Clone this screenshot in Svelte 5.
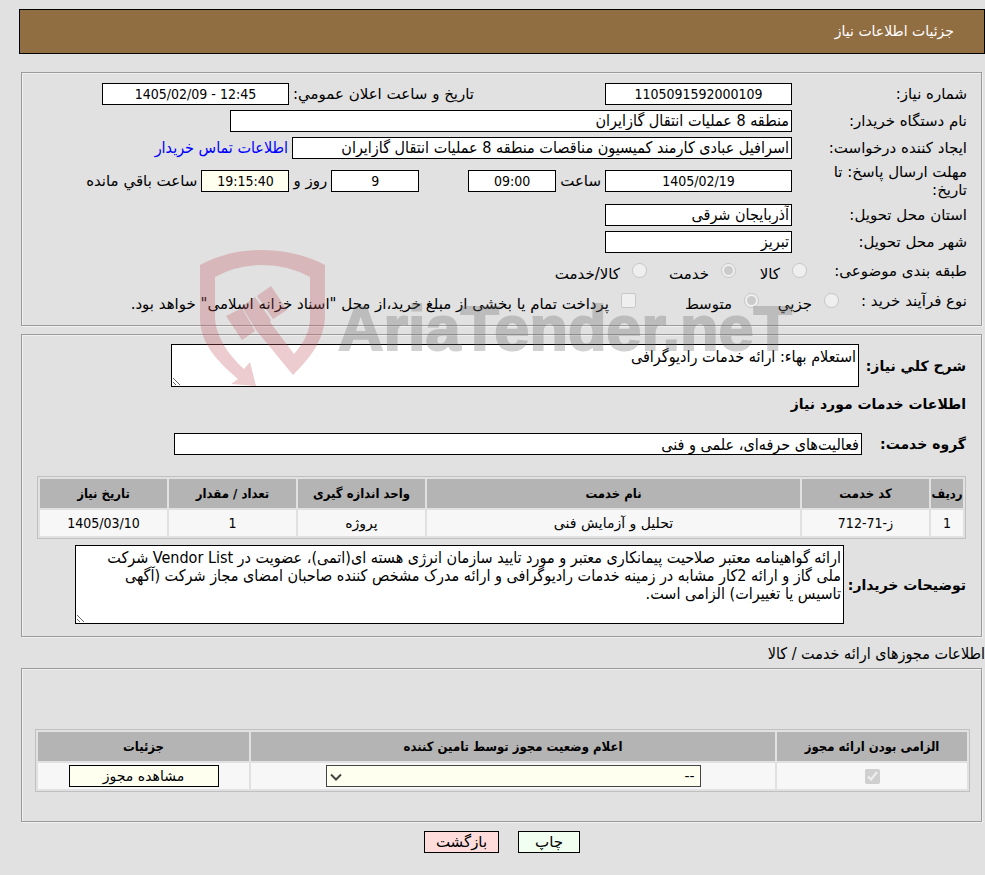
<script lang="ts">
	const services = [
		{
			code: 'ز-71-712',
			name: 'تحلیل و آزمایش فنی',
			unit: 'پروژه',
			amount: '1',
			date: '1405/03/10'
		}
	];

	const generalDescription = 'استعلام بهاء: ارائه خدمات رادیوگرافی';
	const buyerNotes =
		'ارائه گواهینامه معتبر صلاحیت پیمانکاری معتبر و مورد تایید سازمان انرژی هسته ای(اتمی)، عضویت در Vendor List شرکت ملی گاز و ارائه 2کار مشابه در زمینه خدمات رادیوگرافی و ارائه مدرک مشخص کننده صاحبان امضای مجاز شرکت (آگهی تاسیس یا تغییرات) الزامی است.';
</script>

<div class="page" dir="rtl" lang="fa">
	<h1 class="title">جزئیات اطلاعات نیاز</h1>

	<fieldset class="need">
		<div class="row">
			<label class="name" for="need-no">شماره نیاز:</label>
			<input id="need-no" class="box num w-date" value="1105091592000109" readonly />
			<label class="announce" for="announce">تاریخ و ساعت اعلان عمومي:</label>
			<input id="announce" class="box num w-date" value="1405/02/09 - 12:45" readonly />
		</div>
		<div class="row">
			<label class="name" for="org">نام دستگاه خریدار:</label>
			<input id="org" class="box w-org" value="منطقه 8 عملیات انتقال گازایران" readonly />
		</div>
		<div class="row">
			<label class="name" for="creator">ایجاد کننده درخواست:</label>
			<input
				id="creator"
				class="box w-creator"
				value="اسرافیل عبادی کارمند کمیسیون مناقصات منطقه 8 عملیات انتقال گازایران"
				readonly
			/>
			<a href="#contact">اطلاعات تماس خریدار</a>
		</div>
		<div class="row deadline">
			<label class="name" for="deadline">مهلت ارسال پاسخ: تا تاریخ:</label>
			<input id="deadline" class="box num w-date" value="1405/02/19" readonly />
			<label for="hour">ساعت</label>
			<input id="hour" class="box num w-time" value="09:00" readonly />
			<input class="box num w-time days" value="9" aria-label="روز" readonly />
			<span class="and">روز و</span>
			<input id="left" class="box num w-time left" value="19:15:40" readonly />
			<label for="left">ساعت باقي مانده</label>
		</div>
		<div class="row">
			<label class="name" for="province">استان محل تحویل:</label>
			<input id="province" class="box w-date" value="آذربایجان شرقی" readonly />
		</div>
		<div class="row">
			<label class="name" for="city">شهر محل تحویل:</label>
			<input id="city" class="box w-date" value="تبریز" readonly />
		</div>
		<div class="row options">
			<span class="name subject">طبقه بندی موضوعی:</span>
			<label class="option goods"><input type="radio" name="subject" disabled />کالا</label>
			<label class="option service"><input type="radio" name="subject" checked disabled />خدمت</label>
			<label class="option"><input type="radio" name="subject" disabled />کالا/خدمت</label>
		</div>
		<div class="row options">
			<span class="name process">نوع فرآیند خرید :</span>
			<label class="option small"><input type="radio" name="process" disabled />جزيي</label>
			<label class="option medium"><input type="radio" name="process" checked disabled />متوسط</label>
			<label class="option">
				<input type="checkbox" disabled />پرداخت تمام یا بخشی از مبلغ خرید،از محل "اسناد خزانه اسلامی"
				خواهد بود.
			</label>
		</div>
	</fieldset>

	<fieldset class="details">
		<div class="line">
			<label class="strong" for="general">شرح كلي نیاز:</label>
			<textarea id="general" class="general" value={generalDescription} readonly></textarea>
		</div>
		<h2>اطلاعات خدمات مورد نیاز</h2>
		<div class="line">
			<label class="strong group-label" for="group">گروه خدمت:</label>
			<input id="group" class="box w-group" value="فعالیت‌های حرفه‌ای، علمی و فنی" readonly />
		</div>
		<table class="services">
			<thead>
				<tr>
					<th class="c-index">ردیف</th>
					<th class="c-side">کد خدمت</th>
					<th>نام خدمت</th>
					<th class="c-side">واحد اندازه گیری</th>
					<th class="c-side">تعداد / مقدار</th>
					<th class="c-side">تاریخ نیاز</th>
				</tr>
			</thead>
			<tbody>
				{#each services as service, i}
					<tr>
						<td class="figure">{i + 1}</td>
						<td class="figure">{service.code}</td>
						<td>{service.name}</td>
						<td>{service.unit}</td>
						<td class="figure">{service.amount}</td>
						<td class="figure">{service.date}</td>
					</tr>
				{/each}
			</tbody>
		</table>
		<div class="line">
			<label class="strong" for="notes">توضیحات خریدار:</label>
			<textarea id="notes" class="notes" value={buyerNotes} readonly></textarea>
		</div>
	</fieldset>

	<p class="caption">اطلاعات مجوزهای ارائه خدمت / کالا</p>

	<fieldset class="permits">
		<table>
			<thead>
				<tr>
					<th class="c-required">الزامی بودن ارائه مجوز</th>
					<th>اعلام وضعیت مجوز توسط تامین کننده</th>
					<th class="c-view">جزئیات</th>
				</tr>
			</thead>
			<tbody>
				<tr>
					<td><input type="checkbox" aria-label="الزامی بودن ارائه مجوز" checked disabled /></td>
					<td>
						<span class="select-wrap">
							<select aria-label="اعلام وضعیت مجوز توسط تامین کننده">
								<option>--</option>
							</select>
							<svg class="chevron" viewBox="0 0 12 8" aria-hidden="true">
								<path d="M1 1.5 6 6.5 11 1.5" />
							</svg>
						</span>
					</td>
					<td><button type="button" class="view">مشاهده مجوز</button></td>
				</tr>
			</tbody>
		</table>
	</fieldset>

	<div class="actions">
		<button type="button" class="print">چاپ</button>
		<button type="button" class="back">بازگشت</button>
	</div>

	<!-- watermark laid over the form -->
	<svg class="watermark" viewBox="200 248 600 140" aria-hidden="true">
		<g class="shield">
			<path
				d="M200 265Q228 250 262 250T325 265V318C323 342 310 358 293 375L256 330 242 307 244 305 255 297 271 320 270 322 294 354C304 343 310 331 310 318V277Q288 265 262 265T215 277V318C216 338 230 356 244 369L250 362 256 386 231 384 238 379C218 362 201 344 200 320Z"
			/>
			<path d="M271 286 287 310 273 319 257 296Z" />
			<path d="M242 308 226 316 242 340 255 331Z" />
		</g>
		<text x="338" y="350" direction="ltr">AriaTender.neT</text>
	</svg>
</div>

<style>
	:global(body) {
		background: #e1e1e1;
	}

	.page {
		position: relative;
		padding: 9px 0 22px 19px;
		font-family: Tahoma, 'DejaVu Sans', sans-serif;
		font-size: 15px;
		line-height: 18px;
		color: #000;
	}

	.page * {
		box-sizing: border-box;
	}

	.title {
		margin: 0 0 18px;
		padding: 13px 30px;
		background: #916e42;
		border: 1px solid #000;
		color: #fff;
		font-size: 14px;
		font-weight: 400;
		line-height: 17px;
	}

	fieldset {
		margin: 0 3px 0 2px;
		min-width: 0;
		border: 1px solid #9b9b9b;
		box-shadow:
			inset 1px 1px #f0f0f0,
			1px 1px #f0f0f0;
	}

	.need {
		padding: 7px 14px 10px 40px;
	}

	.row {
		display: flex;
		align-items: center;
		gap: 4px;
		min-height: 27px;
	}

	.row > * {
		flex: none;
	}

	.deadline {
		min-height: 40px;
	}

	.name {
		width: 171px;
		padding-left: 30px;
	}

	.announce {
		margin-right: 127px;
	}

	input,
	textarea,
	select,
	button {
		font: inherit;
		color: inherit;
	}

	.box,
	textarea,
	a,
	.caption {
		font-family: Tahoma, 'DejaVu Sans Condensed', sans-serif;
		font-size: 16px;
	}

	.box {
		height: 22px;
		margin: 0;
		padding: 0 2px;
		background: #fff;
		border: 1px solid #000;
	}

	.num {
		direction: ltr;
		font-size: 14px;
		text-align: center;
	}

	.w-date {
		width: 187px;
	}

	.w-org {
		width: 562px;
	}

	.w-creator {
		width: 500px;
	}

	.w-time {
		width: 88px;
	}

	.w-group {
		width: 688px;
	}

	.days {
		margin-right: 45px;
	}

	.left {
		background: #fffff0;
	}

	a {
		color: #00f;
		text-decoration: none;
	}

	.options {
		gap: 0;
		min-height: 30px;
	}

	.options .name {
		margin-top: 2px;
		padding: 0;
		white-space: nowrap;
	}

	.options .subject {
		width: 160px;
	}

	.options .process {
		width: 128px;
	}

	.option {
		display: flex;
		align-items: center;
		margin-top: 8px;
		white-space: nowrap;
	}

	.option input {
		width: 15px;
		height: 15px;
		margin: 0 0 7px 12px;
	}

	.goods {
		width: 71px;
	}

	.service {
		width: 89px;
	}

	.small {
		width: 80px;
	}

	.medium {
		width: 123px;
	}

	.details {
		margin-top: 8px;
		padding: 9px 15px 12px;
	}

	.line {
		display: flex;
		align-items: center;
	}

	.strong,
	h2 {
		font-size: 14px;
		font-weight: 700;
	}

	.strong {
		flex: none;
		min-width: 107px;
	}

	.group-label {
		width: 104px;
		min-width: 0;
	}

	h2 {
		margin: 8px 0 20px;
	}

	textarea {
		display: block;
		margin: 0;
		padding: 3px 2px;
		background: #fff;
		border: 1px solid #000;
	}

	.general {
		width: 688px;
		height: 43px;
	}

	.notes {
		width: 769px;
		height: 79px;
		margin-right: auto;
		margin-left: 38px;
		padding-left: 16px;
	}

	table {
		width: 100%;
		table-layout: fixed;
		border: 1px solid #c0c0c0;
		border-collapse: separate;
		border-spacing: 2px;
		font-size: 14px;
	}

	.services {
		margin: 21px 0 6px;
	}

	th {
		height: 29px;
		padding: 0;
		background: #b4b4b4;
		font-family: Tahoma, 'DejaVu Sans Condensed', sans-serif;
		font-size: 13px;
		font-weight: 700;
		white-space: nowrap;
	}

	td {
		height: 26px;
		padding: 0;
		background: #f7f7f7;
		text-align: center;
	}

	.figure {
		font-family: Tahoma, 'DejaVu Sans Condensed', sans-serif;
	}

	.c-index {
		width: 32px;
	}

	.c-side {
		width: 127px;
	}

	.caption {
		margin: 8px 0 5px;
	}

	.permits {
		padding: 60px 11px 29px 13px;
	}

	.c-required {
		width: 190px;
	}

	.c-view {
		width: 211px;
	}

	.permits input {
		display: block;
		width: 15px;
		height: 15px;
		margin: 0 auto;
	}

	.select-wrap {
		display: inline-block;
		position: relative;
		width: 375px;
		vertical-align: middle;
	}

	select {
		display: block;
		width: 100%;
		height: 22px;
		padding: 0 5px;
		appearance: none;
		background: #fffff0;
		border: 1px solid #444;
		border-radius: 0;
	}

	.chevron {
		position: absolute;
		left: 4px;
		top: 8px;
		width: 12px;
		height: 8px;
		fill: none;
		stroke: #444;
		stroke-width: 2;
		pointer-events: none;
	}

	button {
		height: 22px;
		padding: 0;
		border: 1px solid #000;
	}

	.view {
		display: block;
		width: 150px;
		margin: 0 auto;
		background: #fffff0;
	}

	.actions {
		display: flex;
		justify-content: center;
		gap: 19px;
		margin-top: 9px;
	}

	.print {
		width: 62px;
		background: #f0fff0;
	}

	.back {
		width: 75px;
		background: #ffdcdc;
	}

	.watermark {
		position: absolute;
		left: 200px;
		top: 248px;
		width: 600px;
		height: 140px;
		pointer-events: none;
		opacity: 0.3;
	}

	.shield {
		fill: #c35a62;
	}

	.watermark text {
		fill: #6a6a6a;
		stroke: #6a6a6a;
		stroke-width: 2px;
		font-family: 'Liberation Sans', sans-serif;
		font-size: 63px;
		font-weight: 700;
	}
</style>
